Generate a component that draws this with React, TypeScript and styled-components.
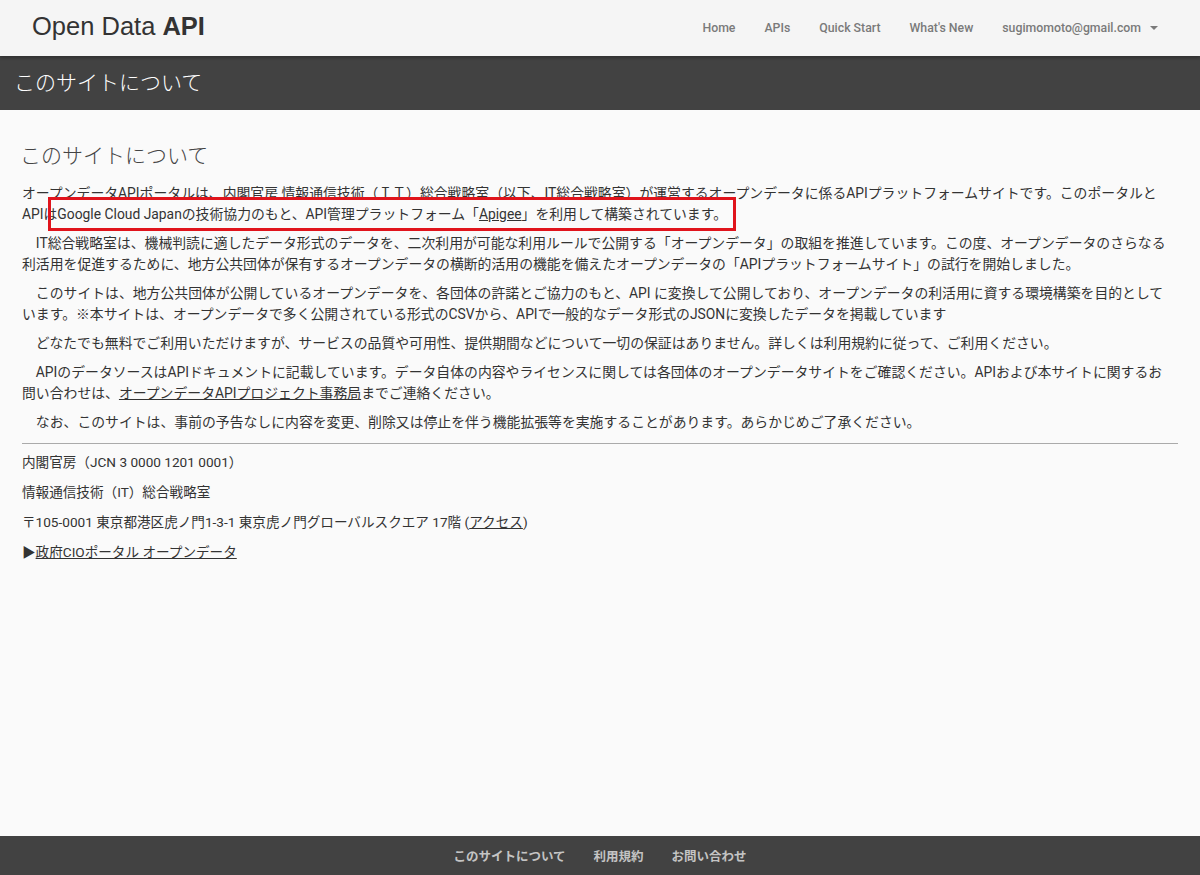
import React from "react";
import styled, { createGlobalStyle } from "styled-components";

const Global = createGlobalStyle`
  html, body {
    margin: 0;
    padding: 0;
    background: #fafafa;
  }
  body {
    font-family: Roboto, "Noto Sans CJK JP", sans-serif;
    color: #333;
  }
`;

const getParagraphs = (): React.ReactNode[] => [
  <>
    オープンデータAPIポータルは、内閣官房 情報通信技術（ＩＴ）総合戦略室（以下、IT総合戦略室）が運営するオープンデータに係るAPIプラットフォームサイトです。このポータルとAPIはGoogle Cloud Japanの技術協力のもと、API管理プラットフォーム「<Link>Apigee</Link>」を利用して構築されています。
  </>,
  <>
    IT総合戦略室は、機械判読に適したデータ形式のデータを、二次利用が可能な利用ルールで公開する「オープンデータ」の取組を推進しています。この度、オープンデータのさらなる利活用を促進するために、地方公共団体が保有するオープンデータの横断的活用の機能を備えたオープンデータの「APIプラットフォームサイト」の試行を開始しました。
  </>,
  <>
    このサイトは、地方公共団体が公開しているオープンデータを、各団体の許諾とご協力のもと、API に変換して公開しており、オープンデータの利活用に資する環境構築を目的としています。※本サイトは、オープンデータで多く公開されている形式のCSVから、APIで一般的なデータ形式のJSONに変換したデータを掲載しています
  </>,
  <>
    どなたでも無料でご利用いただけますが、サービスの品質や可用性、提供期間などについて一切の保証はありません。詳しくは利用規約に従って、ご利用ください。
  </>,
  <>
    APIのデータソースはAPIドキュメントに記載しています。データ自体の内容やライセンスに関しては各団体のオープンデータサイトをご確認ください。APIおよび本サイトに関するお問い合わせは、<Link>オープンデータAPIプロジェクト事務局</Link>までご連絡ください。
  </>,
  <>
    なお、このサイトは、事前の予告なしに内容を変更、削除又は停止を伴う機能拡張等を実施することがあります。あらかじめご了承ください。
  </>,
];

const navItems = ["Home", "APIs", "Quick Start", "What's New"];

const App = () => {
  const paragraphs = getParagraphs();
  return (
    <Page>
      <Global />
      <Header>
        <Logo>
          Open Data <b>API</b>
        </Logo>
        <Nav>
          {navItems.map((item) => (
            <NavItem key={item}>{item}</NavItem>
          ))}
          <NavItem>
            sugimomoto@gmail.com
            <Caret />
          </NavItem>
        </Nav>
      </Header>
      <Band>このサイトについて</Band>
      <Main>
        <Title>このサイトについて</Title>
        <Body>
          {paragraphs.map((p, i) => (
            <Para key={i} $indent={i > 0}>
              {p}
            </Para>
          ))}
          <Highlight />
        </Body>
        <Rule />
        <Info>内閣官房（JCN 3 0000 1201 0001）</Info>
        <Info>情報通信技術（IT）総合戦略室</Info>
        <Info>
          〒105-0001 東京都港区虎ノ門1-3-1 東京虎ノ門グローバルスクエア 17階 (
          <Link>アクセス</Link>)
        </Info>
        <Info>
          ▶<Link>政府CIOポータル オープンデータ</Link>
        </Info>
      </Main>
      <Footer>
        <FooterLink>このサイトについて</FooterLink>
        <FooterLink>利用規約</FooterLink>
        <FooterLink>お問い合わせ</FooterLink>
      </Footer>
    </Page>
  );
};

export default App;

const Page = styled.div`
  min-height: 875px;
  display: flex;
  flex-direction: column;
`;

const Header = styled.header`
  height: 56px;
  background: #f5f5f5;
  display: flex;
  align-items: center;
  justify-content: space-between;
  padding: 0 42px 0 32px;
  box-shadow: 0 2px 3px rgba(0, 0, 0, 0.25);
  position: relative;
  z-index: 1;
`;

const Logo = styled.div`
  font-family: "Liberation Sans", Arial, sans-serif;
  font-size: 25.5px;
  color: #333;
  padding-bottom: 4px;
  b {
    font-weight: bold;
  }
`;

const Nav = styled.nav`
  display: flex;
  align-items: center;
  gap: 29px;
`;

const NavItem = styled.span`
  font-size: 12.3px;
  font-weight: 500;
  color: #7a7a7a;
  display: flex;
  align-items: center;
`;

const Caret = styled.span`
  display: inline-block;
  margin-left: 9px;
  width: 0;
  height: 0;
  border-left: 4px solid transparent;
  border-right: 4px solid transparent;
  border-top: 4px solid #7a7a7a;
`;

const Band = styled.div`
  height: 54px;
  background: #424242;
  color: #fff;
  font-family: "Noto Sans CJK JP", sans-serif;
  font-weight: 300;
  font-size: 21px;
  display: flex;
  align-items: center;
  padding: 0 14px 5px;
  box-sizing: border-box;
`;

const Main = styled.main`
  flex: 1;
  padding: 26px 22px 20px;
`;

const Title = styled.h1`
  font-family: "Noto Sans CJK JP", sans-serif;
  font-weight: 300;
  font-size: 21px;
  color: #444;
  margin: 3px 0 14px -2px;
`;

const Body = styled.div`
  position: relative;
  padding-right: 8px;
`;

const Para = styled.p<{ $indent: boolean }>`
  font-size: 13.85px;
  line-height: 21px;
  color: #333;
  margin: 0 0 8px;
  text-indent: ${(p) => (p.$indent ? "1em" : "0")};
`;

const Link = styled.a`
  color: #333;
  text-decoration: underline;
`;

const Highlight = styled.div`
  position: absolute;
  left: 26px;
  top: 14px;
  width: 688px;
  height: 34px;
  border: 3px solid #e0141c;
  box-sizing: border-box;
`;

const Rule = styled.hr`
  border: none;
  border-top: 1px solid #aaa;
  margin: 10px 0 8px;
`;

const Info = styled.p`
  font-size: 13.6px;
  line-height: 20px;
  color: #333;
  margin: 0 0 10px;
`;

const Footer = styled.footer`
  height: 39px;
  background: #424242;
  display: flex;
  align-items: center;
  justify-content: center;
  gap: 28px;
`;

const FooterLink = styled.span`
  font-family: "Noto Sans CJK JP", sans-serif;
  font-size: 12.5px;
  font-weight: 700;
  color: #c4c4c4;
`;
